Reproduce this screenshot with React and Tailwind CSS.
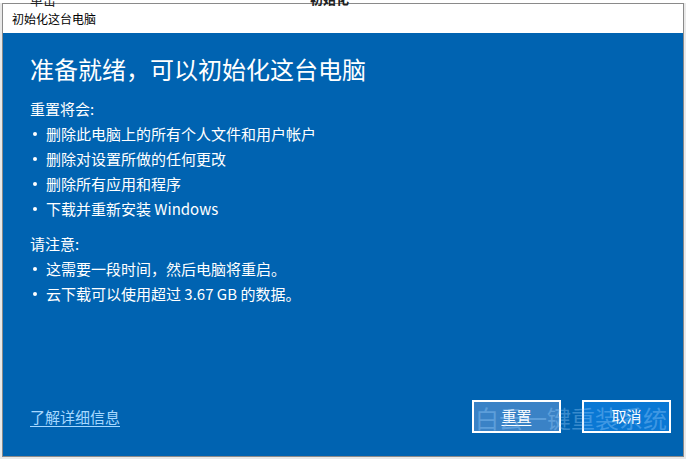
import React from "react";

const font = { fontFamily: '"Noto Sans CJK SC", "Noto Sans", sans-serif' };

function Bullet({ children }) {
  return (
    <div className="flex h-[25px] items-center">
      <span className="ml-[3px] mr-[9px] h-[4px] w-[4px] shrink-0 rounded-full bg-white" />
      <span className="text-[15px] leading-[25px]">{children}</span>
    </div>
  );
}

export default function App() {
  return (
    <div
      className="relative h-[459px] w-[686px] overflow-hidden bg-[#e9e9e9]"
      style={font}
    >
      <div className="absolute left-[30px] top-[-10px] text-[13px] text-[#222]">单击</div>
      <div className="absolute left-[310px] top-[-11px] text-[13px] font-bold text-[#222]">初始化</div>
      <div className="h-[3px] bg-white" />
      <div className="ml-[2px] flex h-[454px] w-[682px] flex-col border border-[#8a8a8a] bg-white">
        <div className="flex h-[29px] shrink-0 items-center bg-white pl-[9px] text-[12px] text-black">
          初始化这台电脑
        </div>
        <div className="relative flex flex-1 flex-col bg-[#0063b1] pl-[27px] pr-[12px] pt-[20px] pb-[23px] text-white">
          <div className="text-[24px] leading-[32px]">准备就绪，可以初始化这台电脑</div>
          <div className="mt-[11px] flex flex-col">
            <div className="h-[25px] text-[15px] leading-[25px]">重置将会:</div>
            <Bullet>删除此电脑上的所有个人文件和用户帐户</Bullet>
            <Bullet>删除对设置所做的任何更改</Bullet>
            <Bullet>删除所有应用和程序</Bullet>
            <Bullet>下载并重新安装 Windows</Bullet>
            <div className="mt-[10px] h-[25px] text-[15px] leading-[25px]">请注意:</div>
            <Bullet>这需要一段时间，然后电脑将重启。</Bullet>
            <Bullet>云下载可以使用超过 3.67 GB 的数据。</Bullet>
          </div>
          <div className="mt-auto flex items-center">
            <span className="text-[15px] leading-[20px] text-[#a6d8ff] underline underline-offset-[3px]">
              了解详细信息
            </span>
            <div className="ml-auto flex gap-[21px]">
              <button className="flex h-[33px] w-[89px] items-center justify-center border-2 border-white bg-[#3a82c6] text-[15px] text-white">
                <span className="underline underline-offset-[3px]">重置</span>
              </button>
              <button className="flex h-[33px] w-[89px] items-center justify-center border-2 border-white bg-[#0a78d4] text-[15px] text-white">
                取消
              </button>
            </div>
          </div>
          <div className="pointer-events-none absolute left-[472px] top-[370px] text-[24px] leading-[30px] text-[#9fd2ff] opacity-35">
            白云一键重装系统
          </div>
        </div>
      </div>
    </div>
  );
}
